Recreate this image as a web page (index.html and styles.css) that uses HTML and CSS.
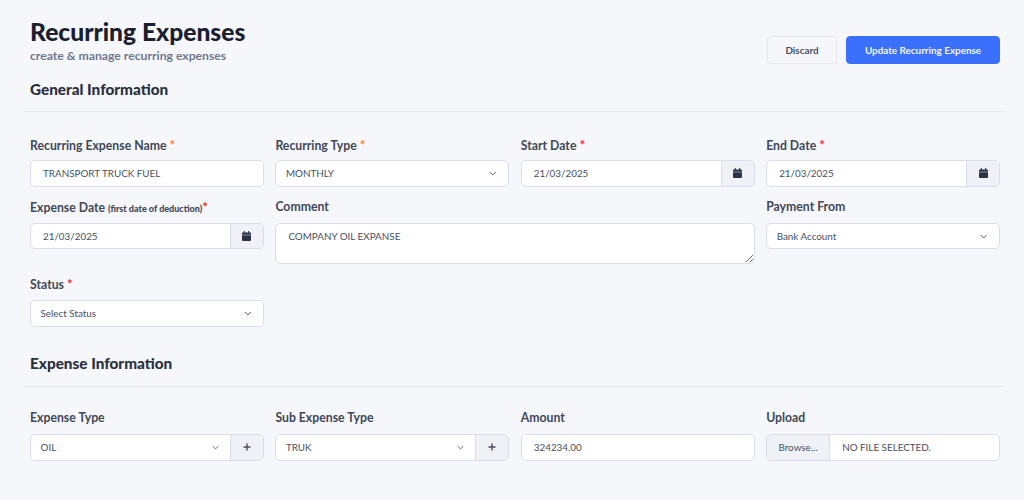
FILE: index.html
```html
<!DOCTYPE html>
<html lang="en">
<head>
<meta charset="utf-8">
<title>Recurring Expenses</title>
<link rel="stylesheet" href="styles.css">
</head>
<body>
<main class="page">
  <header class="head">
    <div>
      <h1 class="title">Recurring Expenses</h1>
      <p class="subtitle">create &amp; manage recurring expenses</p>
    </div>
    <div class="actions">
      <button class="btn btn-light">Discard</button>
      <button class="btn btn-primary">Update Recurring Expense</button>
    </div>
  </header>

  <h2 class="section-title first">General Information</h2>
  <hr class="rule">
  <section class="grid grid-general">
    <div class="field">
      <label class="label">Recurring Expense Name <b class="req orange">*</b></label>
      <div class="control"><span class="value pad-l">TRANSPORT TRUCK FUEL</span></div>
    </div>
    <div class="field">
      <label class="label">Recurring Type <b class="req orange">*</b></label>
      <div class="control"><span class="value pad-s">MONTHLY</span>
        <svg class="chev" viewBox="0 0 10 6"><path d="M1 1l4 4 4-4"/></svg></div>
    </div>
    <div class="field">
      <label class="label">Start Date <b class="req">*</b></label>
      <div class="control"><span class="value pad-l">21/03/2025</span>
        <span class="addon"><svg class="cal" viewBox="0 0 10 11"><path d="M2 0h1.2v1.5h3.6V0H8v1.5h1a1 1 0 0 1 1 1V4H0V2.500a1 1 0 0 1 1-1h1zM0 4.700h10V10a1 1 0 0 1-1 1H1a1 1 0 0 1-1-1z"/></svg></span></div>
    </div>
    <div class="field">
      <label class="label">End Date <b class="req">*</b></label>
      <div class="control"><span class="value pad-l">21/03/2025</span>
        <span class="addon"><svg class="cal" viewBox="0 0 10 11"><path d="M2 0h1.2v1.5h3.6V0H8v1.5h1a1 1 0 0 1 1 1V4H0V2.500a1 1 0 0 1 1-1h1zM0 4.700h10V10a1 1 0 0 1-1 1H1a1 1 0 0 1-1-1z"/></svg></span></div>
    </div>
    <div class="field">
      <label class="label">Expense Date <small class="hint">(first date of deduction)</small><b class="req">*</b></label>
      <div class="control"><span class="value pad-l">21/03/2025</span>
        <span class="addon"><svg class="cal" viewBox="0 0 10 11"><path d="M2 0h1.2v1.5h3.6V0H8v1.5h1a1 1 0 0 1 1 1V4H0V2.500a1 1 0 0 1 1-1h1zM0 4.700h10V10a1 1 0 0 1-1 1H1a1 1 0 0 1-1-1z"/></svg></span></div>
    </div>
    <div class="field span-2">
      <label class="label">Comment</label>
      <textarea class="area" readonly>COMPANY OIL EXPANSE</textarea>
    </div>
    <div class="field">
      <label class="label">Payment From</label>
      <div class="control"><span class="value pad-s">Bank Account</span>
        <svg class="chev" viewBox="0 0 10 6"><path d="M1 1l4 4 4-4"/></svg></div>
    </div>
    <div class="field">
      <label class="label">Status <b class="req">*</b></label>
      <div class="control"><span class="value pad-s">Select Status</span>
        <svg class="chev" viewBox="0 0 10 6"><path d="M1 1l4 4 4-4"/></svg></div>
    </div>
  </section>

  <h2 class="section-title second">Expense Information</h2>
  <hr class="rule rule-second">
  <section class="grid grid-expense">
    <div class="field">
      <label class="label">Expense Type</label>
      <div class="control tall"><span class="value pad-s">OIL</span>
        <svg class="chev small" viewBox="0 0 10 6"><path d="M1 1l4 4 4-4"/></svg>
        <span class="addon"><svg class="plus" viewBox="0 0 8 8"><path d="M4 .5v7M.5 4h7"/></svg></span></div>
    </div>
    <div class="field">
      <label class="label">Sub Expense Type</label>
      <div class="control tall"><span class="value pad-s">TRUK</span>
        <svg class="chev small" viewBox="0 0 10 6"><path d="M1 1l4 4 4-4"/></svg>
        <span class="addon"><svg class="plus" viewBox="0 0 8 8"><path d="M4 .5v7M.5 4h7"/></svg></span></div>
    </div>
    <div class="field">
      <label class="label">Amount</label>
      <div class="control tall"><span class="value pad-l">324234.00</span></div>
    </div>
    <div class="field">
      <label class="label">Upload</label>
      <div class="control tall"><span class="browse">Browse...</span><span class="value pad-f">NO FILE SELECTED.</span></div>
    </div>
  </section>
</main>
</body>
</html>
```
FILE: styles.css
```css
* { box-sizing: border-box; }
html, body { margin: 0; height: 100%; }
body {
  background: #f5f7fb;
  font-family: "Lato", "Noto Sans", sans-serif;
  color: #3f4553;
  overflow: hidden;
}
.page { padding: 0 19px 0 24px; }
.head {
  display: flex;
  justify-content: space-between;
  align-items: flex-start;
  padding: 16px 5px 0 6px;
  height: 71px;
}
.title {
  margin: 0;
  font-size: 24.600px;
  line-height: 32px;
  font-weight: 900;
  color: #1a2030;
}
.subtitle {
  margin: 0;
  font-size: 12.200px;
  line-height: 15px;
  font-weight: 700;
  color: #70788f;
}
.actions { display: flex; gap: 9px; padding-top: 20px; }
.btn {
  height: 28px;
  border-radius: 4px;
  font-family: inherit;
  font-size: 9.900px;
  font-weight: 700;
  padding: 0;
}
.btn-light { width: 70px; background: #f5f7fb; border: 1px solid #e6e9f1; color: #4a5060; }
.btn-primary { width: 154px; background: #3a70fb; border: 1px solid #3a70fb; color: #f2f5ff; }
.section-title {
  margin: 0;
  padding-left: 6px;
  font-size: 15.300px;
  line-height: 20px;
  font-weight: 900;
  color: #2b303d;
}
.first { margin-top: 8px; }
.second { margin-top: 26px; }
.rule {
  margin: 12px 0 0;
  border: 0;
  border-top: 1px solid #e8eaf0;
}
.rule-second { margin-top: 13px; }
.grid {
  display: grid;
  grid-template-columns: repeat(4, 1fr);
  column-gap: 11.500px;
  row-gap: 10.670px;
  padding: 22.500px 5px 0 6px;
}
.grid-expense { padding-top: 21.500px; }
.span-2 { grid-column: span 2; }
.field { display: flex; flex-direction: column; min-width: 0; }
.label {
  height: 20px;
  margin-bottom: 5.500px;
  font-size: 12.250px;
  line-height: 20px;
  font-weight: 700;
  color: #424857;
  white-space: nowrap;
}
.hint { font-size: 9px; font-weight: 900; }
.req { color: #f0301c; font-size: 13.500px; font-weight: 700; }
.orange { color: #f5852a; }
.control {
  display: flex;
  align-items: center;
  height: 26.670px;
  background: #fff;
  border: 1px solid #d9deea;
  border-radius: 5px;
  overflow: hidden;
}
.tall { height: 27.500px; }
.value {
  flex: 1;
  padding-bottom: 1px;
  font-size: 9.850px;
  color: #4a4f5e;
  white-space: nowrap;
}
.pad-l { padding-left: 12px; }
.pad-s { padding-left: 9.500px; }
.pad-f { padding-left: 12px; }
.chev {
  width: 7.500px;
  height: 5px;
  margin-right: 11.500px;
  fill: none;
  stroke: #4a4f5e;
  stroke-width: 1.200;
}
.chev.small { margin-right: 11px; width: 7px; }
.addon {
  display: flex;
  align-items: center;
  justify-content: center;
  width: 33px;
  height: 100%;
  background: #eff1f6;
  border-left: 1px solid #d9deea;
}
.plus { width: 8px; height: 8px; fill: none; stroke: #4a4f5e; stroke-width: 1.400; }
.cal { width: 9px; height: 10px; fill: #2c3245; }
.browse {
  display: flex;
  align-items: center;
  justify-content: center;
  width: 63px;
  height: 100%;
  font-size: 9.850px;
  color: #4a4f5e;
  background: #eff1f6;
  border-right: 1px solid #d9deea;
}
.area {
  display: block;
  height: 41px;
  padding: 5px 12px;
  background: #fff;
  border: 1px solid #d9deea;
  border-radius: 5px;
  font-family: inherit;
  font-size: 9.850px;
  line-height: 14px;
  color: #4a4f5e;
}
```
